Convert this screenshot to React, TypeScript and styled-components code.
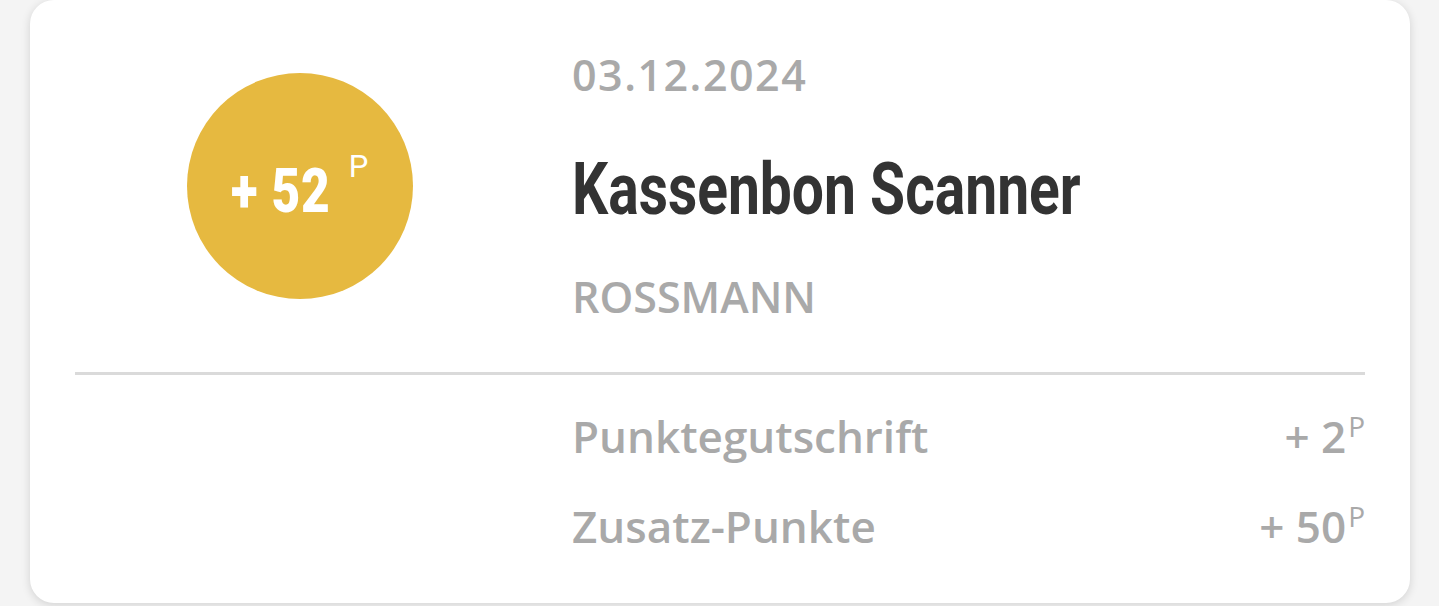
import React from "react";
import styled, { createGlobalStyle } from "styled-components";

const Global = createGlobalStyle`
  html, body { margin: 0; padding: 0; background: #f4f4f4; }
  body { font-family: "Open Sans", "Liberation Sans", sans-serif; }
`;

const Page = styled.div`
  padding: 0 29px 3px 30px;
  height: 606px;
  box-sizing: border-box;
`;

const Card = styled.div`
  background: #ffffff;
  border-radius: 24px;
  box-shadow: 0 2px 10px rgba(0, 0, 0, 0.14);
  height: 603px;
  box-sizing: border-box;
  padding: 0 45px;
  display: flex;
  flex-direction: column;
`;

const Top = styled.div`
  display: grid;
  grid-template-columns: 449px 1fr;
  column-gap: 48px;
  height: 372px;
  border-bottom: 3px solid #dadada;
`;

const BadgeCol = styled.div`
  display: flex;
  align-items: flex-start;
  justify-content: center;
  padding-top: 73px;
`;

const Badge = styled.div`
  width: 226px;
  height: 226px;
  box-sizing: border-box;
  padding-top: 10px;
  border-radius: 50%;
  background: #e6b940;
  display: flex;
  align-items: center;
  justify-content: center;
  color: #fff;
`;

const BadgeGroup = styled.div`
  display: flex;
  align-items: flex-start;
`;

const BadgeNumber = styled.div`
  width: 105px;
  height: 62px;
  white-space: nowrap;
  font-family: Roboto, "Liberation Sans", sans-serif;
  font-weight: 900;
  font-size: 62px;
  line-height: 62px;
  letter-spacing: 1px;
`;

const Condensed = styled.span<{ $scale: number }>`
  display: inline-block;
  transform: scaleX(${(p) => p.$scale});
  transform-origin: left center;
`;

const BadgeSup = styled.div`
  margin: -9px 0 0 13px;
  font-family: Roboto, "Liberation Sans", sans-serif;
  font-weight: 400;
  font-size: 31px;
  line-height: 31px;
`;

const Info = styled.div`
  display: flex;
  flex-direction: column;
  padding-top: 50px;
`;

const Meta = styled.div<{ $spacing?: number }>`
  font-family: "Open Sans", sans-serif;
  font-weight: 600;
  font-size: 43px;
  line-height: 50px;
  color: #a9a9a9;
  letter-spacing: ${(p) => p.$spacing ?? 0}px;
`;

const Title = styled.h1`
  margin: 53px 0 46px;
  white-space: nowrap;
  font-family: Roboto, "Liberation Sans", sans-serif;
  font-weight: 700;
  font-size: 73px;
  line-height: 73px;
  color: #333333;
`;

const Rows = styled.div`
  display: flex;
  flex-direction: column;
  padding: 37px 0 0 497px;
  gap: 42px;
`;

const Row = styled.div`
  display: flex;
  justify-content: space-between;
  align-items: flex-start;
  font-family: "Open Sans", sans-serif;
  font-weight: 600;
  font-size: 44px;
  line-height: 48px;
  color: #a9a9a9;
`;

const Amount = styled.span`
  display: inline-flex;
  align-items: flex-start;
  white-space: pre;
`;

const SmallSup = styled.span`
  font-weight: 400;
  font-size: 28px;
  line-height: 28px;
  margin-left: 2px;
`;

const rows = [
  { label: "Punktegutschrift", value: "+ 2" },
  { label: "Zusatz-Punkte", value: "+ 50" },
];

export default function App() {
  return (
    <>
      <Global />
      <Page>
        <Card>
          <Top>
            <BadgeCol>
              <Badge>
                <BadgeGroup>
                  <BadgeNumber>
                    <Condensed $scale={0.8}>+ 52</Condensed>
                  </BadgeNumber>
                  <BadgeSup>P</BadgeSup>
                </BadgeGroup>
              </Badge>
            </BadgeCol>
            <Info>
              <Meta $spacing={1.5}>03.12.2024</Meta>
              <Title>
                <Condensed $scale={0.78}>Kassenbon Scanner</Condensed>
              </Title>
              <Meta>ROSSMANN</Meta>
            </Info>
          </Top>
          <Rows>
            {rows.map((r) => (
              <Row key={r.label}>
                <span>{r.label}</span>
                <Amount>
                  {r.value}
                  <SmallSup>P</SmallSup>
                </Amount>
              </Row>
            ))}
          </Rows>
        </Card>
      </Page>
    </>
  );
}
